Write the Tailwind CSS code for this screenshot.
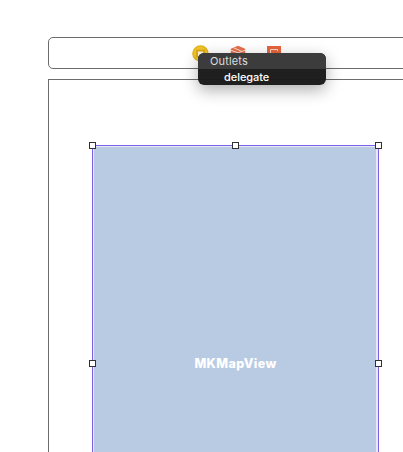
<!DOCTYPE html>
<html lang="en">
<head>
<meta charset="utf-8">
<title>Storyboard canvas</title>
<script src="https://cdn.jsdelivr.net/npm/@tailwindcss/browser@4"></script>
</head>
<body class="bg-white overflow-hidden">
<main class="relative w-[403px] h-[452px] overflow-hidden pl-12 pt-[37px] flex flex-col gap-[10px] font-['Inter','Liberation_Sans',sans-serif]">
  <!-- Scene dock -->
  <header class="h-8 w-[400px] shrink-0 border border-[#6c6c6c] rounded-[5px] flex items-start pt-[7px] pl-[143px]">
    <svg class="w-[17px] h-[17px] shrink-0" viewBox="0 0 17 17"><circle cx="8.5" cy="8.5" r="8.3" fill="#e5b51b"/><circle cx="8.5" cy="8.5" r="6.7" fill="#f1c72d"/><path d="M4 4.5h9v8h-9z" fill="#e0aa14"/><path d="M6 6.5h5v5H6z" fill="#fff8dc"/></svg>
    <svg class="w-4 h-[17px] ml-[21px] shrink-0" viewBox="0 0 16 17"><path d="M8 .8 15.2 3.8v9L8 16.2.8 12.8v-9z" fill="#e8704a"/><path d="m.8 5.2 7.2 2.6 7.2-2.6M8 7.8V16M4 3l7.5 3.2" fill="none" stroke="#fff" stroke-opacity=".75" stroke-width="1"/></svg>
    <svg class="w-[14px] h-[15px] ml-[21px] shrink-0 mt-px" viewBox="0 0 14 15"><path d="M0 0h14v15H0z" fill="#e7653c"/><path d="M10.5 5V3.5h-7v8h7V10M7 7.5h5" fill="none" stroke="#fbd8c9" stroke-width="1"/></svg>
  </header>
  <!-- View controller -->
  <section class="w-[400px] h-[400px] shrink-0 border border-[#6c6c6c] pl-[43px] pt-[65px]">
    <div class="relative w-[287px] h-[436px] border border-[#7e5fe6] bg-[#e6eaf6] pl-px pt-px pr-[2px]">
      <div class="w-full h-full bg-[#b9cbe3] flex items-center justify-center text-white text-[12.5px] leading-4 font-extrabold tracking-[0.4px]"><span class="mt-px pl-px">MKMapView</span></div>
      <i class="absolute -left-1 -top-1 size-[7px] border border-[#303030] bg-white"></i>
      <i class="absolute left-[139px] -top-1 size-[7px] border border-[#303030] bg-white"></i>
      <i class="absolute -right-1 -top-1 size-[7px] border border-[#303030] bg-white"></i>
      <i class="absolute -left-1 top-[214px] size-[7px] border border-[#303030] bg-white"></i>
      <i class="absolute -right-1 top-[214px] size-[7px] border border-[#303030] bg-white"></i>
    </div>
  </section>
  <!-- Connection popup -->
  <div class="absolute left-[198px] top-[53px] w-32 h-8 rounded-[6px] overflow-hidden bg-[#1b1b1b]/98 shadow-[0_5px_16px_rgba(0,0,0,0.32)] text-[11px] leading-4">
    <div class="h-4 pl-3 bg-[#3c3c3c] text-[#dedede] tracking-[0.15px]">Outlets</div>
    <div class="h-4 pl-[26px] text-white font-medium tracking-[-0.05px]">delegate</div>
  </div>
</main>
</body>
</html>
